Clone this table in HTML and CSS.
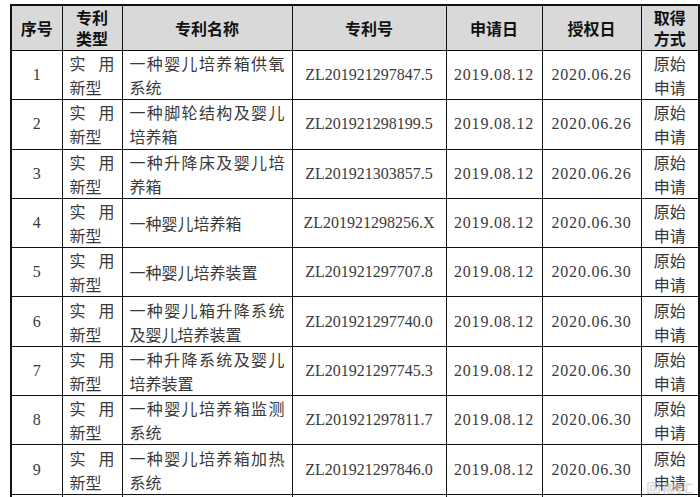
FILE: index.html
```html
<!DOCTYPE html>
<html lang="zh">
<head>
<meta charset="utf-8">
<link rel="stylesheet" href="styles.css">
</head>
<body>
<div class="page">
<table class="patents">
<colgroup>
<col class="c1"><col class="c2"><col class="c3"><col class="c4"><col class="c5"><col class="c6"><col class="c7">
</colgroup>
<thead>
<tr>
<th>序号</th><th class="narrow">专利类型</th><th>专利名称</th><th>专利号</th><th>申请日</th><th>授权日</th><th class="narrow">取得方式</th>
</tr>
</thead>
<tbody>
<tr><td class="num">1</td><td class="type">实用新型</td><td class="name">一种婴儿培养箱供氧系统</td><td class="code">ZL201921297847.5</td><td class="date">2019.08.12</td><td class="date">2020.06.26</td><td class="way">原始申请</td></tr>
<tr><td class="num">2</td><td class="type">实用新型</td><td class="name">一种脚轮结构及婴儿培养箱</td><td class="code">ZL201921298199.5</td><td class="date">2019.08.12</td><td class="date">2020.06.26</td><td class="way">原始申请</td></tr>
<tr><td class="num">3</td><td class="type">实用新型</td><td class="name">一种升降床及婴儿培养箱</td><td class="code">ZL201921303857.5</td><td class="date">2019.08.12</td><td class="date">2020.06.26</td><td class="way">原始申请</td></tr>
<tr><td class="num">4</td><td class="type">实用新型</td><td class="name">一种婴儿培养箱</td><td class="code">ZL201921298256.X</td><td class="date">2019.08.12</td><td class="date">2020.06.30</td><td class="way">原始申请</td></tr>
<tr><td class="num">5</td><td class="type">实用新型</td><td class="name">一种婴儿培养装置</td><td class="code">ZL201921297707.8</td><td class="date">2019.08.12</td><td class="date">2020.06.30</td><td class="way">原始申请</td></tr>
<tr><td class="num">6</td><td class="type">实用新型</td><td class="name">一种婴儿箱升降系统及婴儿培养装置</td><td class="code">ZL201921297740.0</td><td class="date">2019.08.12</td><td class="date">2020.06.30</td><td class="way">原始申请</td></tr>
<tr><td class="num">7</td><td class="type">实用新型</td><td class="name">一种升降系统及婴儿培养装置</td><td class="code">ZL201921297745.3</td><td class="date">2019.08.12</td><td class="date">2020.06.30</td><td class="way">原始申请</td></tr>
<tr><td class="num">8</td><td class="type">实用新型</td><td class="name">一种婴儿培养箱监测系统</td><td class="code">ZL201921297811.7</td><td class="date">2019.08.12</td><td class="date">2020.06.30</td><td class="way">原始申请</td></tr>
<tr><td class="num">9</td><td class="type">实用新型</td><td class="name">一种婴儿培养箱加热系统</td><td class="code">ZL201921297846.0</td><td class="date">2019.08.12</td><td class="date">2020.06.30</td><td class="way">原始申请</td></tr>
<tr class="cut"><td></td><td></td><td></td><td></td><td></td><td></td><td></td></tr>
</tbody>
</table>
<div class="watermark">
<svg class="wm-logo" width="13" height="12" viewBox="0 0 14 13"><rect x="1" y="1" width="12" height="11" fill="none" stroke="#c0c0c0" stroke-width="1.4"/><path d="M10 4H4v5h6V6.5H7" fill="none" stroke="#c0c0c0" stroke-width="1.4"/></svg>
<span class="wm-text">格隆汇</span>
</div>
</div>
</body>
</html>
```
FILE: styles.css
```css
html, body {
  margin: 0;
  padding: 0;
  background: #ffffff;
}
body {
  width: 700px;
  height: 497px;
  overflow: hidden;
}
.page {
  position: relative;
  width: 700px;
  height: 497px;
  padding: 4px 0 0 10px;
  box-sizing: border-box;
  overflow: hidden;
}
.patents {
  border-collapse: collapse;
  table-layout: fixed;
  width: 688px;
  border: 2px solid #111;
  font-family: "Liberation Serif", "Noto Sans CJK SC", serif;
  font-size: 16px;
  color: #3a3a3a;
}
.c1 { width: 51px; }
.c2 { width: 60px; }
.c3 { width: 170px; }
.c4 { width: 154px; }
.c5 { width: 96px; }
.c6 { width: 99px; }
.c7 { width: 58px; }

.patents th,
.patents td {
  border: 1px solid #111;
  padding: 0 7px;
  vertical-align: middle;
}
.patents th {
  background: #d9d9d9;
  font-family: "Noto Sans CJK SC", sans-serif;
  font-weight: 700;
  color: #111;
  line-height: 21px;
  height: 44px;
  text-align: center;
}
.patents th.narrow {
  padding: 0 10px;
}
.patents td {
  line-height: 24px;
  height: 48.3px;
}
.num, .code, .date, .way {
  text-align: center;
}
.type, .name {
  text-align: justify;
  font-family: "Noto Sans CJK SC", sans-serif;
}
.type {
  padding-right: 9px;
}
.way {
  font-family: "Noto Sans CJK SC", sans-serif;
}
.date {
  letter-spacing: 0.8px;
}
.watermark {
  position: absolute;
  right: 8px;
  bottom: 3px;
  display: flex;
  align-items: center;
  gap: 2px;
  opacity: 0.7;
}
.wm-text {
  font-family: "Noto Sans CJK SC", sans-serif;
  font-size: 11px;
  line-height: 12px;
  font-weight: 700;
  color: #c8c8c8;
  letter-spacing: -1px;
}
```
